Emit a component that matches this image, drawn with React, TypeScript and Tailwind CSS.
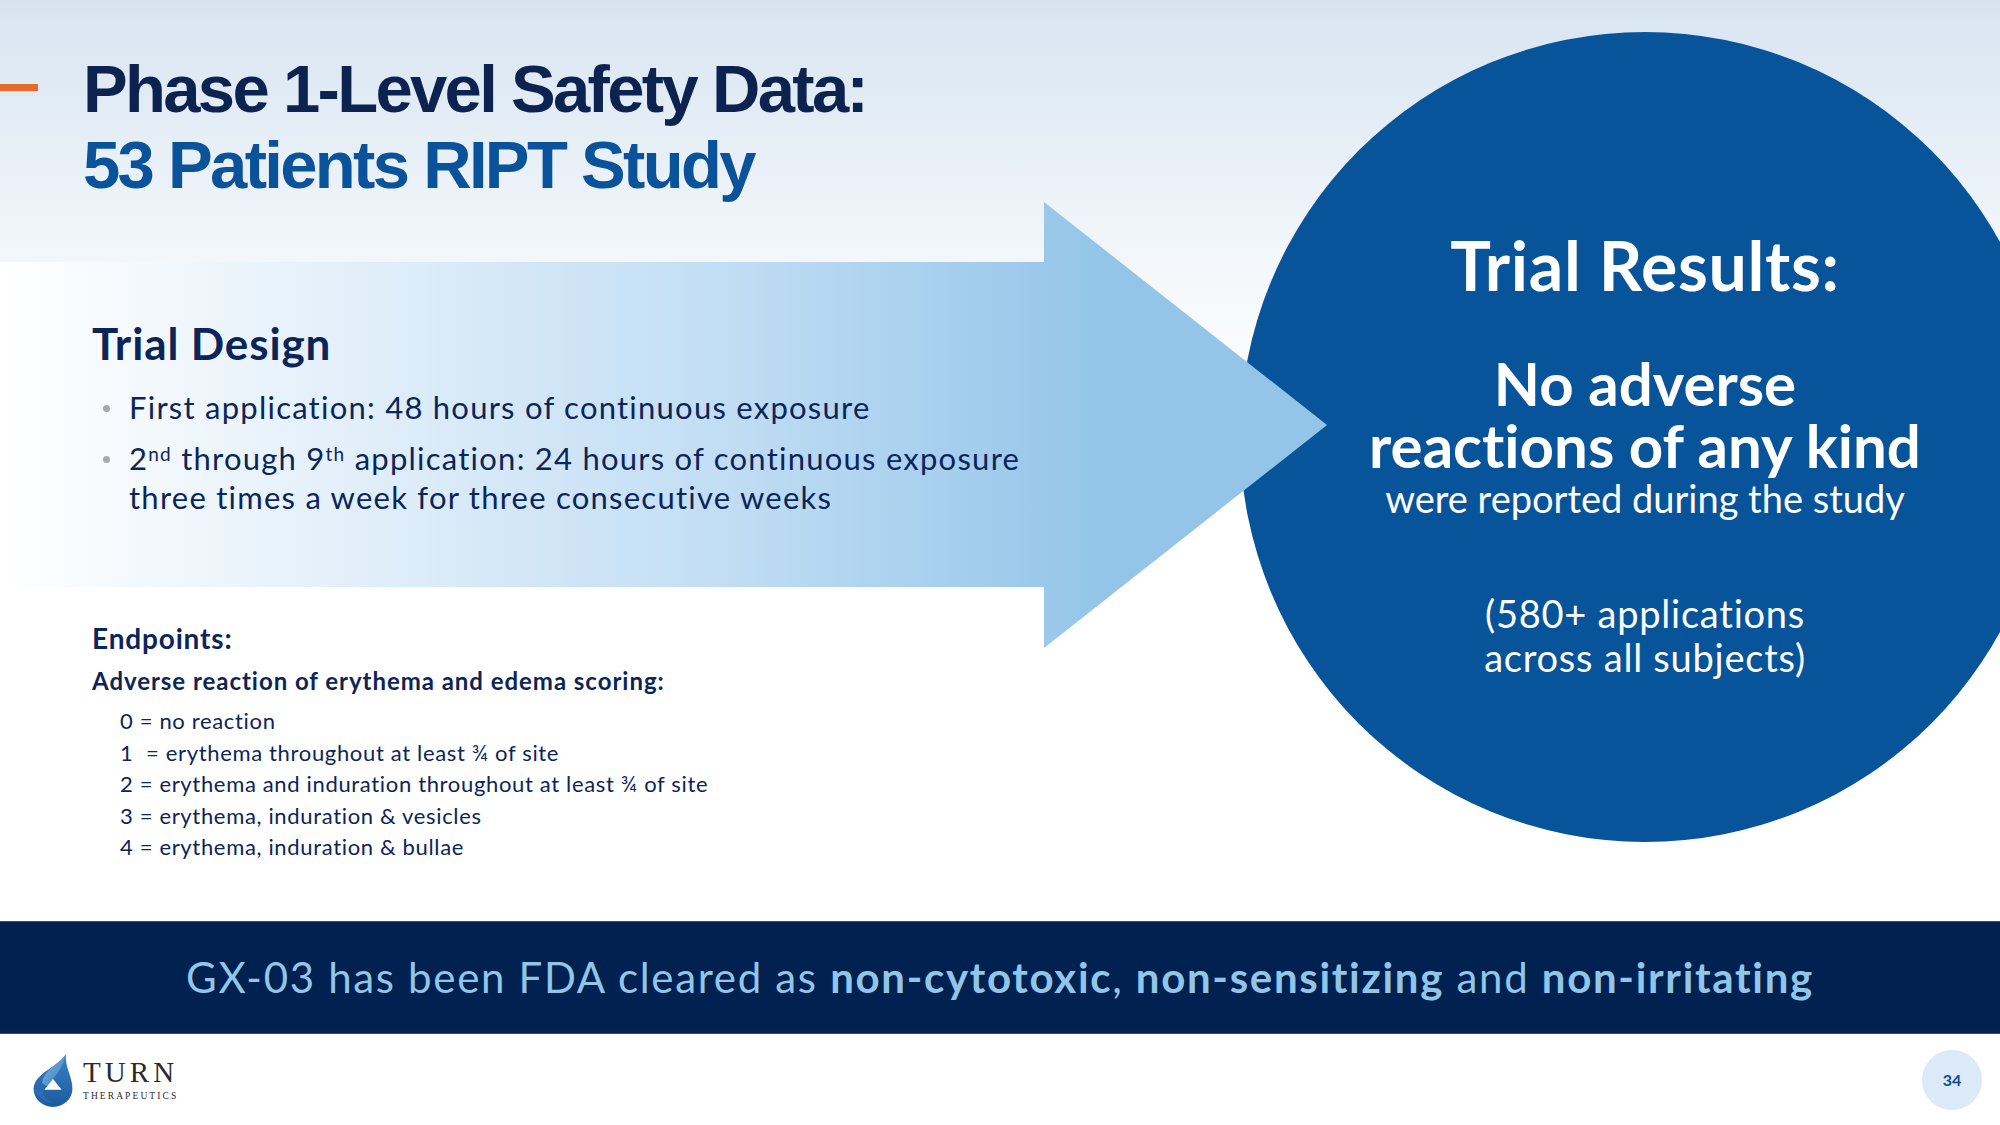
import React from 'react';

function Arrow() {
  return (
    <svg
      className="absolute left-0 top-[202px]"
      width="1327"
      height="446"
      viewBox="0 0 1327 446"
    >
      <defs>
        <linearGradient id="shaft" x1="0" y1="0" x2="1100" y2="0" gradientUnits="userSpaceOnUse">
          <stop offset="0" stopColor="#ffffff" />
          <stop offset="0.3" stopColor="#e4f0fa" />
          <stop offset="0.65" stopColor="#c2def4" />
          <stop offset="1" stopColor="#94c5e9" />
        </linearGradient>
      </defs>
      <path d="M0 60 H1044 V0 L1327 223 L1044 446 V385 H0 Z" fill="url(#shaft)" />
    </svg>
  );
}

function TurnLogo() {
  return (
    <div className="flex items-center gap-[7px]">
      <svg width="46" height="54" viewBox="0 0 42 50">
        <defs>
          <linearGradient id="drop" x1="0" y1="0" x2="0" y2="1">
            <stop offset="0" stopColor="#3b82c4" />
            <stop offset="1" stopColor="#1b5a9e" />
          </linearGradient>
          <linearGradient id="leaf" x1="0" y1="0" x2="1" y2="1">
            <stop offset="0" stopColor="#7fb3e0" />
            <stop offset="1" stopColor="#3c7fc0" />
          </linearGradient>
        </defs>
        <path d="M33 1 C28 12 4 18 3 33 A18 17 0 0 0 39 33 C39 22 32 14 33 1 Z" fill="url(#drop)" />
        <path d="M33 1 C27 10 12 16 11 28 L16 31 C22 22 31 14 33 1 Z" fill="url(#leaf)" />
        <path d="M13 34 L21 24 L29 34 Z" fill="#ffffff" />
        <path d="M3 33 C6 41 14 46 22 46 C14 44 10 38 13 34 Z" fill="#2a6db2" />
      </svg>
      <div className="flex flex-col items-start font-['Liberation_Serif',serif] text-[#2b2b2b]">
        <span className="text-[29px] leading-[27px] tracking-[0.14em]">TURN</span>
        <span className="mt-[5px] text-[9.5px] leading-[10px] tracking-[0.22em]">THERAPEUTICS</span>
      </div>
    </div>
  );
}

export default function App() {
  const scores = [
    '0 = no reaction',
    '1\u00a0 = erythema throughout at least \u00be of site',
    '2 = erythema and induration throughout at least \u00be of site',
    '3 = erythema, induration & vesicles',
    '4 = erythema, induration & bullae',
  ];

  return (
    <div className="w-[2000px] h-[1125px] overflow-hidden bg-white font-['Lato',sans-serif] [font-variant-ligatures:no-common-ligatures]">
      {/* top area */}
      <section className="relative flex h-[921px] bg-[linear-gradient(180deg,#d7e4f0_0%,#e7eff7_16%,#f4f8fb_30%,#ffffff_46%)]">
        <Arrow />

        <div className="relative z-10 flex w-[1240px] shrink-0 flex-col">
          <div className="flex items-start pt-[51px]">
            <div className="mt-[33px] h-[7px] w-[38px] shrink-0 bg-[#e8692b]" />
            <h1 className="ml-[45px] font-['Liberation_Sans',Arial,sans-serif] text-[67px] font-bold leading-[76px] tracking-[-0.04em]">
              <span className="block text-[#0c2350]">Phase 1-Level Safety Data:</span>
              <span className="block text-[#0a539b]">53 Patients RIPT Study</span>
            </h1>
          </div>

          <div className="pl-[92px]">
            <h2 className="mt-[114px] text-[44px] font-bold leading-[53px] tracking-[0.02em] text-[#0c2559]">
              Trial Design
            </h2>
            <ul className="mt-[18px] flex flex-col gap-[12px] text-[31px] leading-[39px] tracking-[0.04em] text-[#0c2559]">
              <li className="flex items-start">
                <span className="mt-[17px] ml-[11px] mr-[19px] h-[7px] w-[7px] shrink-0 rounded-full bg-[#a7a9ac]" />
                <span>First application: 48 hours of continuous exposure</span>
              </li>
              <li className="flex items-start">
                <span className="mt-[17px] ml-[11px] mr-[19px] h-[7px] w-[7px] shrink-0 rounded-full bg-[#a7a9ac]" />
                <span>
                  2<sup className="text-[19px]">nd</sup> through 9<sup className="text-[19px]">th</sup> application: 24
                  hours of continuous exposure
                  <br />
                  three times a week for three consecutive weeks
                </span>
              </li>
            </ul>

            <h3 className="mt-[104px] text-[28px] font-bold leading-[34px] tracking-[0.03em] text-[#0c2559]">
              Endpoints:
            </h3>
            <p className="mt-[11px] text-[24px] font-bold leading-[29px] tracking-[0.04em] text-[#0c2559]">
              Adverse reaction of erythema and edema scoring:
            </p>
            <ul className="mt-[10px] pl-[28px] text-[22px] leading-[31.5px] tracking-[0.03em] text-[#0c2559]">
              {scores.map((s) => (
                <li key={s} className="whitespace-pre">
                  {s}
                </li>
              ))}
            </ul>
          </div>
        </div>

        <div className="mt-[32px] flex h-[810px] w-[810px] shrink-0 flex-col items-center rounded-full bg-[#07549b] pt-[193px] text-center text-white">
          <p className="text-[68px] font-bold leading-[80px] tracking-[0.01em]">Trial Results:</p>
          <p className="mt-[47px] text-[60px] font-bold leading-[62px]">No adverse</p>
          <p className="text-[60px] font-bold leading-[62px]">reactions of any kind</p>
          <p className="text-[38px] leading-[45px]">were reported during the study</p>
          <p className="mt-[70px] text-[38px] leading-[44px] tracking-[0.02em]">
            (580+ applications
            <br />
            across all subjects)
          </p>
        </div>
      </section>

      {/* banner */}
      <div className="flex h-[113px] items-center justify-center border-y border-[#34507a] bg-[#012250] text-[42px] leading-[111px] tracking-[0.04em] text-[#93c5e8]">
        <p>
          GX-03 has been FDA cleared as <b>non-cytotoxic</b>, <b>non-sensitizing</b> and <b>non-irritating</b>
        </p>
      </div>

      {/* footer */}
      <footer className="flex h-[91px] items-center justify-between pl-[30px] pr-[18px]">
        <TurnLogo />
        <div className="flex h-[60px] w-[60px] items-center justify-center rounded-full bg-[#dce9f6] text-[16px] font-bold text-[#0a4f96]">
          34
        </div>
      </footer>
    </div>
  );
}
